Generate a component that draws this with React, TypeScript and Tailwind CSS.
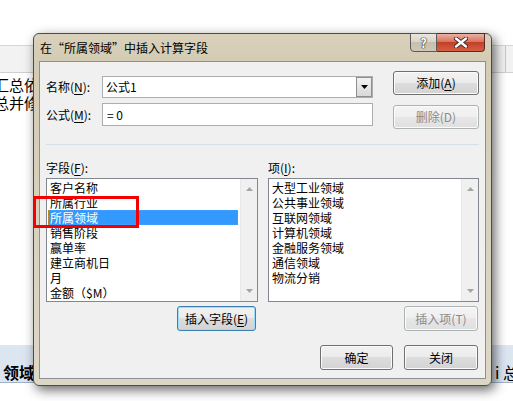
import React from "react";

const fieldItems = ["客户名称", "所属行业", "所属领域", "销售阶段", "赢单率", "建立商机日", "月", "金额（$M）"];
const valueItems = ["大型工业领域", "公共事业领域", "互联网领域", "计算机领域", "金融服务领域", "通信领域", "物流分销"];

const ScrollBar = () => (
  <div className="w-[17px] flex flex-col justify-between items-center bg-[#f0f0f0] border-l border-[#e8e8e8] py-[8px]">
    <svg width="7" height="4" viewBox="0 0 7 4">
      <path d="M0 4 L3.5 0 L7 4Z" fill="#a6a6a6" />
    </svg>
    <svg width="7" height="4" viewBox="0 0 7 4">
      <path d="M0 0 L3.5 4 L7 0Z" fill="#a6a6a6" />
    </svg>
  </div>
);

interface ListBoxProps {
  items: string[];
  selected?: string;
}

const ListBox = ({ items, selected }: ListBoxProps) => (
  <div className="flex h-[124px] border border-[#828790] bg-white">
    <div className="flex-1 pt-[1px] pl-[1px] pr-[2px] overflow-hidden">
      {items.map((it) =>
        it === selected ? (
          <div
            key={it}
            className="h-[15px] leading-[15px] pl-[2px] bg-[#3399ff] text-white outline-1 outline-dotted outline-[#c98a2e] -outline-offset-1"
          >
            {it}
          </div>
        ) : (
          <div key={it} className="h-[15px] leading-[15px] pl-[2px] text-black">
            {it}
          </div>
        )
      )}
    </div>
    <ScrollBar />
  </div>
);

interface WinButtonProps {
  children: React.ReactNode;
  disabled?: boolean;
  focused?: boolean;
  className?: string;
}

const WinButton = ({ children, disabled = false, focused = false, className = "" }: WinButtonProps) => {
  let look =
    "border-[#707070] text-black bg-[linear-gradient(#f2f2f2_0%,#ebebeb_50%,#dddddd_50%,#d3d3d3_100%)] shadow-[inset_0_0_0_1px_#fbfbfb]";
  if (disabled)
    look =
      "border-[#adb2b5] text-[#8a8a8a] bg-[linear-gradient(#f4f4f4_0%,#efefef_50%,#e6e6e6_50%,#e0e0e0_100%)] shadow-[inset_0_0_0_1px_#fbfbfb]";
  if (focused)
    look =
      "border-[#3c7fb1] text-black bg-[linear-gradient(#f2f2f2_0%,#ebebeb_50%,#dddddd_50%,#d3d3d3_100%)] shadow-[inset_0_0_0_1px_#9fdcf8]";
  return (
    <div className={`flex items-center justify-center rounded-[3px] border text-[12px] leading-[14px] ${look} ${className}`}>
      {children}
    </div>
  );
};

const Key = ({ k }: { k: string }) => <span className="underline underline-offset-2">{k}</span>;

export default function App() {
  return (
    <div className="relative w-[513px] h-[401px] overflow-hidden bg-white font-['Noto_Sans_CJK_SC','Noto_Sans',sans-serif]">
      {/* spreadsheet behind the dialog */}
      <div className="h-[45px]" />
      <div className="h-[28px] flex justify-end bg-[#f2f2f2] border-t border-[#d6d6d6] border-b border-b-[#cfcfcf]">
        <div className="w-[8px] border-l border-[#c8c8c8]" />
      </div>
      <div className="pt-[3px] w-[33px] overflow-hidden text-[15px] leading-[18px] text-black whitespace-nowrap">
        <div className="-ml-[6px]">汇总依</div>
        <div className="-ml-[6px]">总并修</div>
      </div>
      <div className="h-[233px]" />
      <div className="h-[38px] flex items-end justify-between bg-[#dce6f1] border-b border-[#9fb2c8] pb-[1px] text-[16px] leading-[18px] font-bold text-black whitespace-nowrap">
        <span className="pl-[3px] w-[33px] overflow-hidden">领域</span>
        <span className="w-[20px] overflow-hidden font-normal pl-[2px]">i 总</span>
      </div>

      {/* dialog window */}
      <div className="absolute left-[33px] top-[33px] w-[459px] h-[353px] flex flex-col rounded-[6px] border border-[#4b4b4b] bg-[linear-gradient(#d9d1bb_0%,#d3cbb3_8%,#ddd7c6_100%)] shadow-[3px_4px_12px_rgba(0,0,0,0.6)]">
        <div className="h-[27px] flex items-start justify-between">
          <div className="pl-[6px] pt-[6px] text-[12px] leading-[16px] text-black">在“所属领域”中插入计算字段</div>
          <div className="flex mr-[6px] -mt-[1px]">
            <div className="w-[27px] h-[19px] flex items-center justify-center rounded-bl-[4px] border border-[#5b5b5b] bg-[linear-gradient(#ebe7de_0%,#d8d2c4_50%,#c6bfad_50%,#cfc8b6_100%)] text-[13px] leading-[13px] font-bold text-white [text-shadow:0_0_1px_#222,0_0_1px_#222,0_0_1px_#222]">
              ?
            </div>
            <div className="w-[48px] h-[19px] flex items-center justify-center rounded-br-[4px] border border-l-0 border-[#5b2a22] bg-[linear-gradient(#ecb0a2_0%,#d9735f_45%,#c2402a_50%,#d55f45_100%)]">
              <svg width="14" height="11" viewBox="0 0 14 11">
                <path d="M2 1.5 L12 9.5 M12 1.5 L2 9.5" stroke="#3a2a26" strokeWidth="4.2" strokeLinecap="round" />
                <path d="M2 1.5 L12 9.5 M12 1.5 L2 9.5" stroke="#ffffff" strokeWidth="2.4" strokeLinecap="round" />
              </svg>
            </div>
          </div>
        </div>

        {/* client area */}
        <div className="mx-[5px] h-[318px] flex flex-col bg-[#f0f0f0] border border-[#8d8f94] px-[6px] text-[12px] text-black">
          <div className="mt-[9px] flex gap-[10px]">
            <div className="w-[366px] pt-[5px] flex flex-col gap-[5px]">
              <div className="flex items-center">
                <div className="w-[56px] leading-[14px]">
                  名称(<Key k="N" />):
                </div>
                <div className="w-[271px] h-[22px] flex items-center border border-[#abadb3] bg-white">
                  <span className="flex-1 pl-[3px] leading-[14px]">公式1</span>
                  <div className="w-[16px] h-[20px] flex items-center justify-center border border-[#8e8f8f] bg-[linear-gradient(#f2f2f2,#d9d9d9)]">
                    <svg width="7" height="4" viewBox="0 0 7 4">
                      <path d="M0 0 L3.5 4 L7 0Z" fill="#000" />
                    </svg>
                  </div>
                </div>
              </div>
              <div className="flex items-center">
                <div className="w-[56px] leading-[14px]">
                  公式(<Key k="M" />):
                </div>
                <div className="w-[271px] h-[23px] flex items-center border border-[#abadb3] bg-white pl-[4px] leading-[14px]">
                  = 0
                </div>
              </div>
            </div>
            <div className="flex flex-col gap-[10px]">
              <WinButton className="w-[86px] h-[24px]">
                添加(<Key k="A" />)
              </WinButton>
              <WinButton disabled className="w-[86px] h-[24px]">
                删除(D)
              </WinButton>
            </div>
          </div>

          <div className="mt-[15px] h-[1px] bg-[#d5dfe5]" />

          <div className="mt-[16px] grid grid-cols-[212px_211px] gap-x-[10px]">
            <div className="h-[17px] leading-[14px]">
              字段(<Key k="F" />):
            </div>
            <div className="h-[17px] leading-[14px]">
              项(<Key k="I" />):
            </div>
            <ListBox items={fieldItems} selected="所属领域" />
            <ListBox items={valueItems} />
            <div className="mt-[4px] flex justify-end pr-[2px]">
              <WinButton focused className="w-[79px] h-[25px]">
                插入字段(<Key k="E" />)
              </WinButton>
            </div>
            <div className="mt-[4px] flex justify-end pr-[1px]">
              <WinButton disabled className="w-[74px] h-[25px]">
                插入项(T)
              </WinButton>
            </div>
          </div>

          <div className="mt-[14px] flex justify-end gap-[11px] pr-[1px]">
            <WinButton className="w-[73px] h-[25px]">确定</WinButton>
            <WinButton className="w-[74px] h-[25px]">关闭</WinButton>
          </div>
        </div>
      </div>

      {/* red highlight annotation */}
      <div className="absolute left-[33px] top-[196px] w-[106px] h-[32px] border-[3px] border-[#f40000]" />
    </div>
  );
}
